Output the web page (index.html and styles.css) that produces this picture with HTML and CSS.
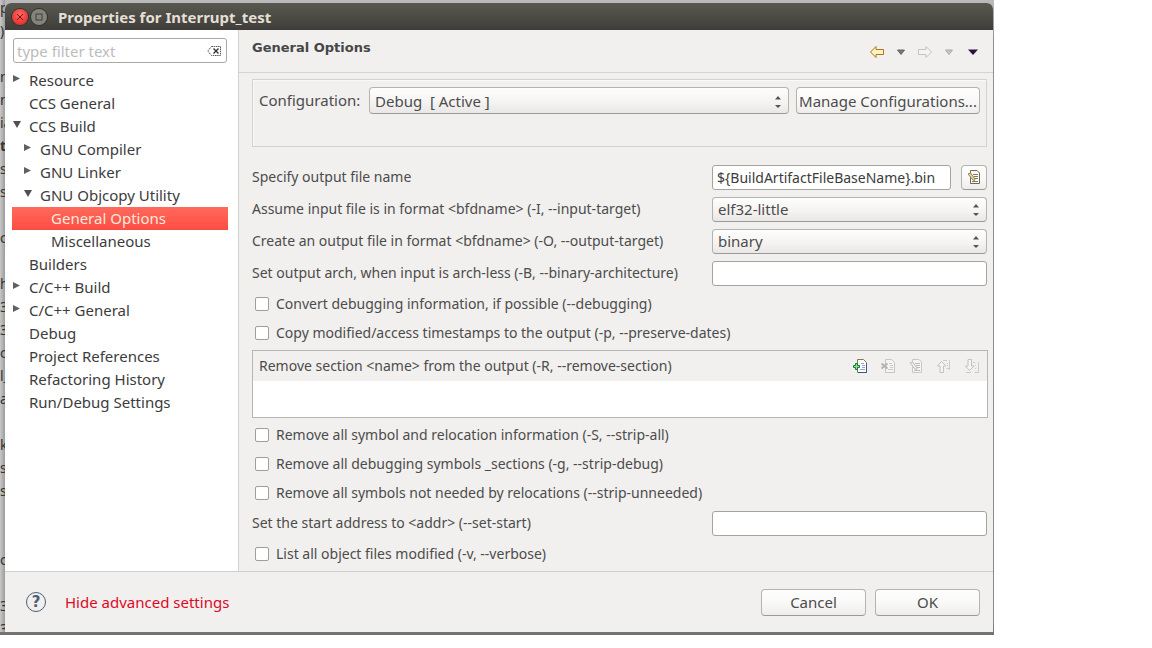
FILE: index.html
```html
<!DOCTYPE html>
<html lang="en">
<head>
<meta charset="utf-8">
<title>Properties for Interrupt_test</title>
<link rel="stylesheet" href="styles.css">
</head>
<body>
<div class="desktop">
  <div class="behind" aria-hidden="true">
    <span>p</span><span>)</span><span></span><span>n</span><span>n</span><span>ia</span><span class="strong">t,</span><span>s</span><span>s</span><span></span><span>c</span><span></span><span>h</span><span>3</span><span>3</span><span>c</span><span>l_</span><span>a</span><span></span><span>ky</span><span>s</span><span>s</span><span></span><span></span><span>c</span><span></span><span>3</span><span>3</span>
  </div>
  <section class="window" role="dialog" aria-labelledby="win-title">
    <header class="titlebar">
      <button class="win-btn close" aria-label="Close"><svg viewBox="0 0 16 16"><path d="M5 5l6 6M11 5l-6 6"/></svg></button>
      <button class="win-btn max" aria-label="Maximize"><svg viewBox="0 0 16 16"><rect x="5" y="5" width="6" height="6"/></svg></button>
      <h1 id="win-title">Properties for Interrupt_test</h1>
    </header>

    <div class="body">
      <nav class="sidebar">
        <div class="filter">
          <input type="text" placeholder="type filter text" aria-label="Filter text">
          <button class="clear" aria-label="Clear filter"><svg viewBox="0 0 15 12"><path d="M4.500 1.500H13.500V10.500H4.500L.8 6z" fill="none" stroke="#555" stroke-dasharray="1.500 .7"/><path d="M6.500 3.500l5 5M11.500 3.500l-5 5" stroke="#333" stroke-width="1.400"/></svg></button>
        </div>
        <ul class="tree">
          <li><i class="arrow shut"></i>Resource</li>
          <li><i class="arrow"></i>CCS General</li>
          <li><i class="arrow open"></i>CCS Build</li>
          <li class="lvl2"><i class="arrow shut"></i>GNU Compiler</li>
          <li class="lvl2"><i class="arrow shut"></i>GNU Linker</li>
          <li class="lvl2"><i class="arrow open"></i>GNU Objcopy Utility</li>
          <li class="lvl3 selected"><i class="arrow"></i>General Options</li>
          <li class="lvl3"><i class="arrow"></i>Miscellaneous</li>
          <li><i class="arrow"></i>Builders</li>
          <li><i class="arrow shut"></i>C/C++ Build</li>
          <li><i class="arrow shut"></i>C/C++ General</li>
          <li><i class="arrow"></i>Debug</li>
          <li><i class="arrow"></i>Project References</li>
          <li><i class="arrow"></i>Refactoring History</li>
          <li><i class="arrow"></i>Run/Debug Settings</li>
        </ul>
      </nav>

      <main class="main">
        <div class="page-head">
          <h2>General Options</h2>
          <div class="nav-tools">
            <button class="tool" aria-label="Back"><svg viewBox="0 0 16 16"><path d="M1.500 8L7 2.500V5.500H14.500V10.500H7V13.500z" fill="#fff3b8" stroke="#b0722c"/></svg></button>
            <button class="tool small" aria-label="Back history"><svg viewBox="0 0 8 6"><path d="M.5 1h7L4 5.500z" fill="#777" stroke="#666"/></svg></button>
            <button class="tool" aria-label="Forward" disabled><svg viewBox="0 0 16 16"><path d="M14.500 8L9 2.500V5.500H1.500V10.500H9V13.500z" fill="#f5f4f2" stroke="#c4c3c1"/></svg></button>
            <button class="tool small" aria-label="Forward history" disabled><svg viewBox="0 0 8 6"><path d="M.5 1h7L4 5.500z" fill="#c8c7c5" stroke="#aaa"/></svg></button>
            <button class="tool menu" aria-label="View menu"><svg viewBox="0 0 10 6"><path d="M0 .5h10L5 6z" fill="#2f1040"/></svg></button>
          </div>
        </div>

        <form class="content">
          <div class="config">
            <label for="cfg">Configuration:</label>
            <span class="combo"><select id="cfg"><option>Debug&nbsp; [ Active ]</option></select><svg viewBox="0 0 6 12"><path d="M0 3.500L3 0L6 3.500zM0 9h6L3 12z"/></svg></span>
            <button type="button" class="btn">Manage Configurations...</button>
          </div>

          <div class="row">
            <label for="out">Specify output file name</label>
            <div class="control">
              <input id="out" class="field" type="text" value="${BuildArtifactFileBaseName}.bin">
              <button type="button" class="btn var" aria-label="Insert variable"><svg viewBox="0 0 16 16"><path d="M4.500 1.500H11L13.500 4V14.500H4.500z" fill="#fffdf2" stroke="#6d6754"/><path d="M7 5.500h5M8 7.500h4M8 9.500h4M6 12.500h6" stroke="#777"/><path d="M2 5L4.500 4L9 10L8.500 11.500L7 11z" fill="#ead79b" stroke="#938352"/></svg></button>
            </div>
          </div>
          <div class="row">
            <label for="inf">Assume input file is in format &lt;bfdname&gt; (-I, --input-target)</label>
            <div class="control"><span class="combo"><select id="inf"><option>elf32-little</option></select><svg viewBox="0 0 6 12"><path d="M0 3.500L3 0L6 3.500zM0 9h6L3 12z"/></svg></span></div>
          </div>
          <div class="row">
            <label for="outf">Create an output file in format &lt;bfdname&gt; (-O, --output-target)</label>
            <div class="control"><span class="combo"><select id="outf"><option>binary</option></select><svg viewBox="0 0 6 12"><path d="M0 3.500L3 0L6 3.500zM0 9h6L3 12z"/></svg></span></div>
          </div>
          <div class="row">
            <label for="arch">Set output arch, when input is arch-less (-B, --binary-architecture)</label>
            <div class="control"><input id="arch" class="field" type="text"></div>
          </div>
          <label class="check"><input type="checkbox">Convert debugging information, if possible (--debugging)</label>
          <label class="check"><input type="checkbox">Copy modified/access timestamps to the output (-p, --preserve-dates)</label>

          <section class="listbox">
            <div class="list-head">
              <h3>Remove section &lt;name&gt; from the output (-R, --remove-section)</h3>
              <div class="list-tools">
                <button type="button" class="tool" aria-label="Add"><svg viewBox="0 0 16 16"><path d="M5.500 1.500H11.500L14.500 4.500V14.500H5.500z" fill="#fbfcff" stroke="#8d7445"/><path d="M14.500 5v9.500H6" fill="none" stroke="#445577"/><path d="M9 5.500h3M10 7.500h3M10 9.500h3M8 11.500h5" stroke="#8eaad6"/><path d="M3.500 5.500h2v2h2v2h-2v2h-2v-2h-2v-2h2z" fill="#8fdc9a" stroke="#118033"/></svg></button>
                <button type="button" class="tool" aria-label="Delete" disabled><svg viewBox="0 0 16 16"><path d="M5.500 1.500H11.500L14.500 4.500V14.500H5.500z" fill="#f5f4f3" stroke="#c6c5c3"/><path d="M9 5.500h3M10 7.500h3M10 9.500h3M8 11.500h5" stroke="#ccc"/><path d="M1.500 5.500l6 5M7.500 5.500l-6 5" stroke="#b4b3b1" stroke-width="2"/></svg></button>
                <button type="button" class="tool" aria-label="Edit" disabled><svg viewBox="0 0 16 16"><path d="M4.500 1.500H11L13.500 4V14.500H4.500z" fill="#f5f4f3" stroke="#c9c8c6"/><path d="M7 5.500h5M8 7.500h4M8 9.500h4M6 12.500h6" stroke="#bbb"/><path d="M2 5L4.500 4L9 10L8.500 11.500L7 11z" fill="#eee" stroke="#bebdbb"/></svg></button>
                <button type="button" class="tool" aria-label="Move up" disabled><svg viewBox="0 0 16 16"><path d="M5.500 3.500L10 8H7.500V14.500H4V8H1.500z" fill="#f5f4f3" stroke="#c3c2c0"/><path d="M7 2.500h4M13.500 2v10M10.500 10.500h3M11 5.500h1M11 7.500h1" fill="none" stroke="#cccbc9"/></svg></button>
                <button type="button" class="tool" aria-label="Move down" disabled><svg viewBox="0 0 16 16"><path d="M5.500 12.500L10 8H7.500V1.500H4V8H1.500z" fill="#f5f4f3" stroke="#c3c2c0"/><path d="M9 4.500h2M14.500 4v11M10.500 14.500h4M2 14.500h5M11 7.500h1M11 10.500h1" fill="none" stroke="#cccbc9"/></svg></button>
              </div>
            </div>
            <div class="list-body"></div>
          </section>

          <label class="check"><input type="checkbox">Remove all symbol and relocation information (-S, --strip-all)</label>
          <label class="check"><input type="checkbox">Remove all debugging symbols _sections (-g, --strip-debug)</label>
          <label class="check"><input type="checkbox">Remove all symbols not needed by relocations (--strip-unneeded)</label>
          <div class="row">
            <label for="start">Set the start address to &lt;addr&gt; (--set-start)</label>
            <div class="control"><input id="start" class="field" type="text"></div>
          </div>
          <label class="check"><input type="checkbox">List all object files modified (-v, --verbose)</label>
        </form>
      </main>
    </div>

    <footer class="footer">
      <button class="help" aria-label="Help">?</button>
      <a class="advanced" href="#">Hide advanced settings</a>
      <button class="btn wide">Cancel</button>
      <button class="btn wide">OK</button>
    </footer>
  </section>
</div>
</body>
</html>
```
FILE: styles.css
```css
* { box-sizing: border-box; }

body {
  margin: 0;
  background: #fff;
  color: #4c4c4c;
  font: 15px/20px "Noto Sans", "Open Sans", sans-serif;
}

h1, h2, h3, ul { margin: 0; padding: 0; font-weight: normal; }
button, input, select { font: inherit; color: inherit; margin: 0; }
button { padding: 0; border: 0; background: none; }
svg { display: block; }

.desktop {
  display: flex;
  width: calc(100% - 158px);
  min-width: 900px;
  height: calc(100vh - 13px);
  min-height: 635px;
  padding: 3px 1px 3px 0;
  overflow: hidden;
  background: linear-gradient(#b9b9b9 0 3px, #8f8f8f 40px, #8a8a8a 98%, #6e706e);
}

.behind {
  flex: 0 0 5px;
  display: flex;
  flex-direction: column;
  align-items: flex-start;
  margin-top: -7px;
  overflow: hidden;
  background: linear-gradient(90deg, #c8c8c8, #9c9c9c);
  color: #333;
  font-size: 14px;
}
.behind span { flex: 0 0 23px; line-height: 23px; }
.behind .strong { font-weight: bold; }

.window {
  flex: 1;
  display: flex;
  flex-direction: column;
  min-width: 0;
  border-radius: 6px 6px 0 0;
  overflow: hidden;
  background: #f1f0ee;
}

.titlebar {
  flex: 0 0 27px;
  display: flex;
  align-items: center;
  gap: 3px;
  padding-left: 7px;
  background: linear-gradient(#595850, #3e3d39);
}
.titlebar h1 {
  margin-left: 8px;
  color: #e3dfd4;
  font-size: 15px;
  font-weight: bold;
}
.win-btn {
  width: 16px;
  height: 16px;
  border-radius: 50%;
  box-shadow: 0 0 0 1px #33322e;
}
.win-btn svg { fill: none; stroke: #403f3b; }
.close { background: radial-gradient(circle at 50% 35%, #ff6a60, #dc1f22); }
.close svg { stroke: #761312; }
.max { background: #85837b; }

.body { flex: 1; display: flex; min-height: 0; }

.sidebar {
  flex: 0 0 234px;
  min-width: 0;
  padding: 8px 10px 0 7px;
  border-right: 1px solid #d3d2d0;
  background: #fff;
}
.filter {
  display: flex;
  align-items: center;
  height: 25px;
  margin: 0 1px;
  padding: 0 4px 0 3px;
  border: 1px solid #aaa9a6;
  border-radius: 3px;
}
.filter input {
  flex: 1;
  min-width: 0;
  padding: 0;
  border: 0;
  outline: 0;
  background: none;
}
.filter input::placeholder { color: #bcbcbc; opacity: 1; }
.clear svg { width: 15px; height: 12px; }

.tree { margin-top: 6px; list-style: none; color: #3c3c3c; }
.tree li {
  display: flex;
  align-items: center;
  height: 23px;
  padding-bottom: 1px;
  white-space: nowrap;
}
.tree .lvl2 { padding-left: 11px; }
.tree .lvl3 { padding-left: 22px; }
.tree .selected {
  background: linear-gradient(#ff6a5c, #fd4c42);
  color: #fbe9dc;
}
.arrow { flex: 0 0 17px; height: 10px; }
.arrow::before {
  content: "";
  display: block;
  width: 7px;
  height: 7px;
  margin-left: 1px;
}
.shut::before { background: #606060; clip-path: polygon(0 0, 100% 50%, 0 100%); }
.open::before { width: 8px; background: #505050; clip-path: polygon(0 0, 100% 0, 50% 100%); }

.main { flex: 1; min-width: 0; }

.page-head {
  display: flex;
  justify-content: space-between;
  height: 43px;
  padding: 8px 15px 0 13px;
  border-bottom: 1px solid #d5d4d2;
}
.page-head h2 {
  font: bold 13px/20px "DejaVu Sans", sans-serif;
  color: #474747;
}
.nav-tools { display: flex; align-items: center; gap: 12px; height: 28px; }
.tool svg { width: 16px; height: 16px; }
.small svg { width: 8px; height: 6px; }
.menu { margin-left: 3px; }
.menu svg { width: 10px; height: 6px; }

.content { padding: 6px 6px 0 13px; }

.config {
  display: flex;
  align-items: flex-start;
  gap: 7px;
  height: 68px;
  margin-bottom: 14px;
  padding: 7px 6px;
  border: 1px solid #d3d2d0;
  box-shadow: inset 1px 1px #f9f9f8;
}
.config label { flex: 0 0 103px; line-height: 27px; white-space: nowrap; }
.config .combo, .config .btn { height: 27px; }
.config .btn { flex: 0 0 184px; white-space: nowrap; }

.combo { flex: 1; position: relative; height: 25px; }
.combo select {
  appearance: none;
  width: 100%;
  height: 100%;
  padding: 0 20px 0 5px;
  border: 1px solid #b5b3af;
  border-bottom-color: #9c9a97;
  border-radius: 4px;
  background: linear-gradient(#fdfdfd, #f6f5f4 50%, #e9e8e6);
}
.combo svg {
  position: absolute;
  right: 8px;
  top: calc(50% - 5px);
  width: 6px;
  height: 12px;
  fill: #555;
  pointer-events: none;
}

.btn {
  border: 1px solid #b5b3af;
  border-bottom-color: #9c9a97;
  border-radius: 4px;
  background: linear-gradient(#fdfdfd, #f9f9f8 50%, #eeedeb);
}

.row {
  display: flex;
  align-items: center;
  justify-content: space-between;
  height: 32px;
}
.row label { font-size: 14px; white-space: nowrap; }
.control { flex: 0 0 275px; display: flex; gap: 10px; }
.field {
  flex: 1;
  min-width: 0;
  height: 25px;
  padding: 0 4px;
  border: 1px solid #a5a3a0;
  border-radius: 3px;
  background: #fff;
  color: #3c3c3c;
  font-size: 14px;
}
.var { flex: 0 0 26px; display: grid; place-items: center; }
.var svg { width: 16px; height: 16px; }

.check {
  display: flex;
  align-items: center;
  gap: 7px;
  height: 29px;
  padding-left: 3px;
  font-size: 14px;
  white-space: nowrap;
}
.check input {
  appearance: none;
  width: 14px;
  height: 14px;
  border: 1px solid #a09e9b;
  border-radius: 2px;
  background: #fff;
}

.listbox {
  margin: 3px -1px 2px 0;
  border: 1px solid #b6b5b3;
}
.list-head {
  display: flex;
  align-items: center;
  justify-content: space-between;
  height: 30px;
  padding: 0 7px 0 6px;
}
.list-head h3 { font-size: 14px; white-space: nowrap; }
.list-tools { display: flex; gap: 12px; }
.list-body { height: 36px; background: #fff; }

.footer {
  flex: 0 0 61px;
  display: flex;
  align-items: center;
  padding: 0 13px 0 21px;
  border-top: 1px solid #d0cfcd;
}
.help {
  width: 20px;
  height: 20px;
  border: 1px solid #4c6075;
  border-radius: 50%;
  color: #4c6075;
  font: bold 15px/18px "DejaVu Sans", sans-serif;
}
.advanced {
  margin: 0 auto 0 19px;
  color: #df0827;
  text-decoration: none;
}
.wide { width: 105px; height: 27px; margin-left: 9px; }
```
